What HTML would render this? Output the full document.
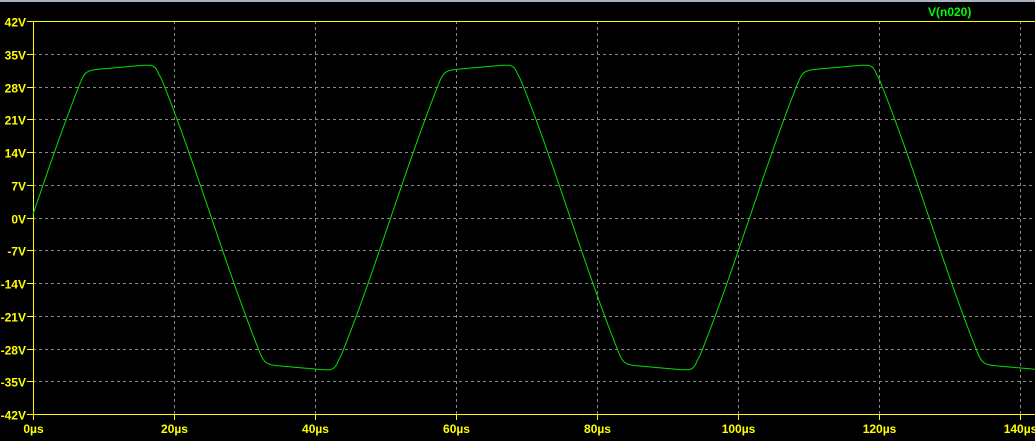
<!DOCTYPE html>
<html><head><style>
body{margin:0;background:#000;width:1035px;height:441px;overflow:hidden}
svg{display:block}
text{font-family:"Liberation Sans",sans-serif;font-weight:bold;font-size:12px}
</style></head><body>
<svg id="s" width="1035" height="441" xmlns="http://www.w3.org/2000/svg">
<rect width="1035" height="441" fill="#000"/>
<rect width="1035" height="2" fill="#a8b4c0"/>
<g id="g"></g>
<text x="928" y="16" fill="#00ff00">V(n020)</text>
<polyline id="w" fill="none" stroke="#00e000" stroke-width="1"/>
</svg>
<script>
var g=document.getElementById('g'),h='';
var X0=33,SX=7.05,Y0=217.5,SY=393/84;
for(var i=0;i<=12;i++){var v=42-7*i,y=21+i*393/12;y=Math.round(y)+0.5;
 if(i>0&&i<12)h+='<line x1="33" y1="'+y+'" x2="1035" y2="'+y+'" stroke="#888" stroke-dasharray="3,3"/>';
 h+='<line x1="27" y1="'+y+'" x2="33" y2="'+y+'" stroke="#ff0"/>';
 h+='<text x="26" y="'+(y+5)+'" fill="#ff0" text-anchor="end">'+v+'V</text>';}
for(var j=0;j<=7;j++){var x=Math.round(X0+j*20*SX)+0.5;
 if(j>0)h+='<line x1="'+x+'" y1="21" x2="'+x+'" y2="414" stroke="#888" stroke-dasharray="3,3"/>';
 h+='<line x1="'+x+'" y1="414" x2="'+x+'" y2="420" stroke="#ff0"/>';
 h+='<text x="'+x+'" y="433" fill="#ff0" text-anchor="middle">'+(j*20)+'µs</text>';}
h+='<line x1="33" y1="21.5" x2="1035" y2="21.5" stroke="#ff0"/><line x1="33" y1="414.5" x2="1035" y2="414.5" stroke="#ff0"/><line x1="33.5" y1="21" x2="33.5" y2="414" stroke="#ff0"/>';
g.innerHTML=h;
var P=50.9,p=[];
function tri(t){var q=((t%P)+P)%P/P;if(q<0.25)return q*4;if(q<0.75)return 2-q*4;return q*4-4;}
for(var px=0;px<=1002;px++){var t=px/SX+0.15;
 var raw=0.6*52*tri(t)+0.4*40*Math.sin(2*Math.PI*t/P);
 var s=Math.sign(raw),a=Math.abs(raw),c=31.5,k=3;
 if(a>c-k){a=c-k+k*Math.tanh((a-c+k)/k);}
 var tp=((t%P)+P)%P;
 if(a>30.5){var f=(tp<P/2)?(tp-8)/9:(tp-P/2-8)/9;f=Math.max(0,Math.min(1,f));a+=f*1.2*Math.min(1,a-30.5);}
 p.push((X0+px).toFixed(1)+','+(Y0-s*a*SY).toFixed(1));}
document.getElementById('w').setAttribute('points',p.join(' '));
</script>
</body></html>
